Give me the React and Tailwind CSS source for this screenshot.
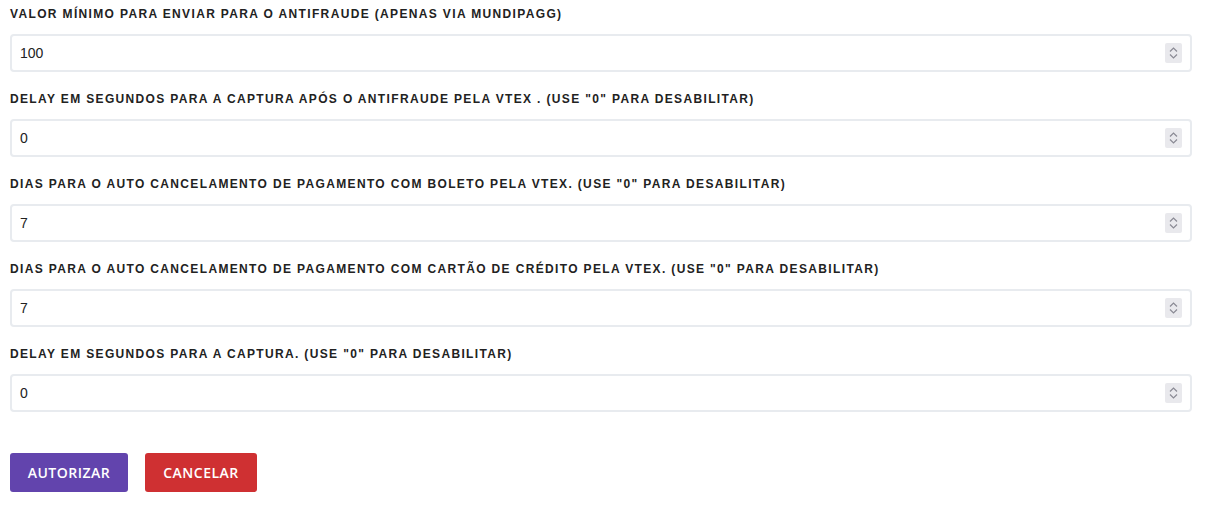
import React from 'react';

const fields = [
  { label: 'Valor mínimo para enviar para o antifraude (apenas via Mundipagg)', value: '100' },
  { label: 'Delay em segundos para a captura após o antifraude pela VTEX . (Use "0" para desabilitar)', value: '0' },
  { label: 'Dias para o auto cancelamento de pagamento com boleto pela VTEX. (Use "0" para desabilitar)', value: '7' },
  { label: 'Dias para o auto cancelamento de pagamento com cartão de crédito pela VTEX. (Use "0" para desabilitar)', value: '7' },
  { label: 'Delay em segundos para a captura. (Use "0" para desabilitar)', value: '0' },
];

function Spinner() {
  return (
    <div className="w-[17px] h-[20px] bg-[#e9e9ed] rounded-[2px] flex flex-col items-center justify-center gap-[2px]">
      <svg width="9" height="5" viewBox="0 0 9 5" fill="none">
        <path d="M1 4.5L4.5 1L8 4.5" stroke="#8a8a94" strokeWidth="1.2" />
      </svg>
      <svg width="9" height="5" viewBox="0 0 9 5" fill="none">
        <path d="M1 0.5L4.5 4L8 0.5" stroke="#8a8a94" strokeWidth="1.2" />
      </svg>
    </div>
  );
}

export default function App() {
  return (
    <div className="bg-white min-h-[530px] px-[10px] pt-[7px] font-['Liberation_Sans',Arial,sans-serif]">
      <div className="w-[1182px] flex flex-col gap-[20px]">
        {fields.map((f, i) => (
          <div key={i} className="flex flex-col gap-[13px]">
            <label className="text-[12px] leading-[14px] font-bold uppercase tracking-[1.35px] text-[#222]">
              {f.label}
            </label>
            {/* number input with always-visible spin box */}
            <div className="h-[38px] border-2 border-[#e8ebef] rounded-[4px] flex items-center justify-between pl-[8px] pr-[8px]">
              <span className="text-[14px] text-[#222]">{f.value}</span>
              <Spinner />
            </div>
          </div>
        ))}
      </div>

      <div className="flex gap-[17px] mt-[41px] font-['Open_Sans',sans-serif]">
        <button className="h-[39px] w-[118px] rounded-[3px] bg-[#6244ad] text-white text-[14px] font-semibold uppercase tracking-[0.5px]">
          Autorizar
        </button>
        <button className="h-[39px] w-[112px] rounded-[3px] bg-[#cf3032] text-white text-[14px] font-semibold uppercase tracking-[0.5px]">
          Cancelar
        </button>
      </div>
    </div>
  );
}
